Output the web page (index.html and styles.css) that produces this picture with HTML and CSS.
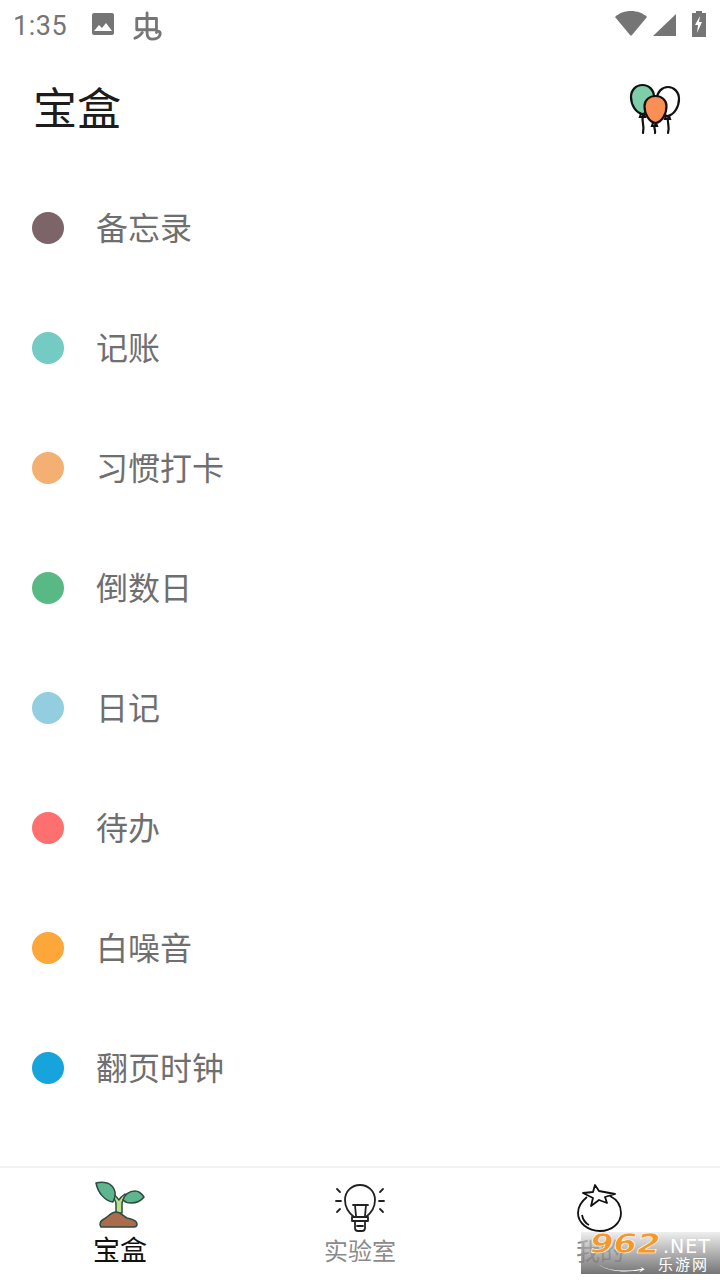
FILE: index.html
```html
<!DOCTYPE html>
<html lang="zh-CN">
<head>
    <meta charset="UTF-8">
    <meta name="viewport" content="width=device-width, initial-scale=1.0">
    <title>宝盒</title>
    <link rel="stylesheet" href="styles.css">
</head>
<body>

<div class="page">
    <!-- Status bar -->
    <div class="status-bar">
        <div class="status-left">
            <span class="status-time">1:35</span>
            <svg class="status-image" width="24" height="24" viewBox="0 0 24 24"><rect x="1" y="1" width="22" height="22" rx="2" fill="#757575"/><path d="M3 19l5-6 3 3 4-5 6 8z" fill="#fff"/></svg>
            <svg class="status-bug" width="30" height="32" viewBox="0 0 32 32" fill="none" stroke="#757575" stroke-width="3" stroke-linecap="round" stroke-linejoin="round"><path d="M4 8h21v12H4z"/><path d="M15 2v21c0 4 1 7 5 7 5 0 9-2 9-6 0-3-4-3-4-1"/><path d="M2 29c3-1 6-3 8-6"/></svg>
        </div>
        <div class="status-right">
            <svg class="status-wifi" width="32" height="26" viewBox="0 0 32 26"><path d="M0 6C4 2 10 0 16 0s12 2 16 6L17 24a1.4 1.4 0 0 1-2 0z" fill="#757575"/></svg>
            <svg class="status-signal" width="23" height="22" viewBox="0 0 23 22"><path d="M23 0v22H0z" fill="#757575"/></svg>
            <svg width="14" height="26" viewBox="0 0 14 26"><path d="M4 0h6v2h4v24H0V2h4z" fill="#757575"/><path d="M8 5L3 14h3l-1 8 5-11H7z" fill="#fff"/></svg>
        </div>
    </div>

    <header class="app-header">
        <h1>宝盒</h1>
        <svg class="balloons" width="52" height="52" viewBox="0 0 52 52" fill="none" stroke="#111" stroke-width="2.2" stroke-linecap="round">
            <path d="M39 35c-1 5 2 8 0 15M37 33l-1 3h5l-1-3"/>
            <path d="M38.500 33C32 32 28 24 28 16c0-7 5-12 11-12s11 5 11 12c0 8-5 16-11.500 17z" fill="#fff"/>
            <path d="M14 33c-2 5 2 9 0 17M12 31l-1 3h5l-1-3"/>
            <path d="M13.500 31C7 30 2 22 2 14 2 7 7 2 13.500 2S25 7 25 14c0 8-5 16-11.500 17z" fill="#7dcfac"/>
            <path d="M26 42c-2 3 1 5 0 8M24 40l-1 3h5l-1-3"/>
            <path d="M26.500 40C20 39 15.500 31 15.500 23c0-6 5-10 11-10s11 4 11 10c0 8-4.500 16-11 17z" fill="#fa8f55"/>
        </svg>
    </header>

    <ul class="tool-list">
        <li class="tool-item"><span class="dot dot-memo"></span><span class="tool-name">备忘录</span></li>
        <li class="tool-item"><span class="dot dot-account"></span><span class="tool-name">记账</span></li>
        <li class="tool-item"><span class="dot dot-habit"></span><span class="tool-name">习惯打卡</span></li>
        <li class="tool-item"><span class="dot dot-countdown"></span><span class="tool-name">倒数日</span></li>
        <li class="tool-item"><span class="dot dot-diary"></span><span class="tool-name">日记</span></li>
        <li class="tool-item"><span class="dot dot-todo"></span><span class="tool-name">待办</span></li>
        <li class="tool-item"><span class="dot dot-noise"></span><span class="tool-name">白噪音</span></li>
        <li class="tool-item"><span class="dot dot-clock"></span><span class="tool-name">翻页时钟</span></li>
    </ul>

    <nav class="tab-bar">
        <div class="tab tab-active">
            <svg width="50" height="50" viewBox="0 0 50 50" stroke="#2f4a40" stroke-width="1.5" stroke-linejoin="round">
                <path d="M21 33V24c0-3-3-7-7-10l2-2c3 2 6 5 8 8 1-2 3-4 6-6l2 2c-3 2-5 5-5 8v9z" fill="#b9e08a"/>
                <path d="M18 22C10 21 3 13 1 3c8-2 15 0 18 6 2 4 1 9-1 13z" fill="#5eb68e"/>
                <path d="M28 20c1-5 6-9 12-9 4 0 7 3 9 6-3 4-8 6-13 6-3 0-6-1-8-3z" fill="#5eb68e"/>
                <path d="M6 47c-2-3-1-6 3-8 4-2 7-7 12-7 5 0 7 4 11 6 5 1 10 3 10 6 0 2-1 3-3 3z" fill="#ab6b4d"/>
            </svg>
            <span class="tab-label">宝盒</span>
        </div>
        <div class="tab">
            <svg class="tab-icon-low" width="50" height="48" viewBox="0 0 50 48" fill="none" stroke="#222" stroke-width="1.8" stroke-linecap="round" stroke-linejoin="round">
                <path d="M19 33c-5-4-9-10-9-17C10 7 17 1 25 1s15 6 15 15c0 7-4 13-9 17"/>
                <path d="M18 21h15M20 21l1 11M31 21l-1 11"/>
                <path d="M17 33h16v4H17zM20 37v7c0 2 1 3 3 3h4c2 0 3-1 3-3v-7M22 42h6"/>
                <path d="M2 5l3 3M1 17h5M2 28l3-3M48 5l-3 3M49 17h-5M48 28l-3-3"/>
            </svg>
            <span class="tab-label">实验室</span>
        </div>
        <div class="tab">
            <svg class="tab-icon-low" width="46" height="50" viewBox="0 0 46 50" fill="none" stroke="#111" stroke-width="1.8" stroke-linejoin="round">
                <path d="M10 13C5 17 1 22 1 29c0 10 10 18 22 18s21-8 21-18c0-8-5-14-11-17"/>
                <path d="M18 1l4 6 16 3-10 3 2 6-8-3-8 6 2-8-10-5 10-1z" fill="#fff"/>
                <path d="M5 31c1 5 3 8 7 10"/>
            </svg>
            <span class="tab-label tab-label-me">我的</span>
        </div>
    </nav>

    <!-- Site watermark over the corner -->
    <div class="watermark">
        <div class="wm-top"><span class="wm-num">962</span><span class="wm-net">.NET</span></div>
        <div class="wm-cn">乐游网</div>
        <svg class="wm-swoosh" width="68" height="10" viewBox="0 0 76 16"><path d="M2 2c16 12 46 12 70 7l-3-3 7 4-9 5 3-4C46 16 16 14 2 2z" fill="#fff"/></svg>
    </div>
</div>

</body>
</html>
```

FILE: styles.css
```css
/* Body styling */
body {
    margin: 0;
    font-family: Roboto, "Noto Sans CJK SC", sans-serif;
    background: #ffffff;
}

.page {
    position: relative;
    width: 720px;
    height: 1280px;
    display: flex;
    flex-direction: column;
    overflow: hidden;
}

/* Status bar */
.status-bar {
    height: 48px;
    flex: none;
    display: flex;
    justify-content: space-between;
    align-items: center;
    padding: 0 14px 0 13px;
    box-sizing: border-box;
}

.status-left {
    display: flex;
    align-items: center;
}

.status-time {
    font-size: 27px;
    color: #757575;
    letter-spacing: 0.5px;
    margin-top: 3px;
}

.status-image {
    margin-left: 24px;
}

.status-bug {
    margin-left: 18px;
    margin-top: 4px;
}

.status-right {
    display: flex;
    align-items: center;
}

.status-wifi {
    margin-right: 6px;
    margin-top: -1px;
}

.status-signal {
    margin-right: 16px;
    margin-top: 2px;
}

/* Header */
.app-header {
    height: 120px;
    flex: none;
    display: flex;
    justify-content: space-between;
    align-items: center;
    padding: 0 39px 0 33px;
}

.app-header h1 {
    margin: 0 0 4px;
    font-size: 44px;
    font-weight: 400;
    color: #1c1c1c;
}

.balloons {
    margin-top: 2px;
}

/* Tool list */
.tool-list {
    list-style: none;
    margin: 0;
    padding: 0;
    flex: 1;
}

.tool-item {
    height: 120px;
    display: flex;
    align-items: center;
    padding-left: 32px;
    font-size: 32px;
    color: #6f6f6f;
}

.tool-name {
    margin-bottom: 4px;
}

.dot {
    width: 32px;
    height: 32px;
    border-radius: 50%;
    margin-right: 32px;
}

.dot-memo { background: #7d6468; }
.dot-account { background: #73cbc3; }
.dot-habit { background: #f4af73; }
.dot-countdown { background: #59b985; }
.dot-diary { background: #92cde0; }
.dot-todo { background: #fe7070; }
.dot-noise { background: #fda63a; }
.dot-clock { background: #17a3dc; }

/* Bottom tabs */
.tab-bar {
    height: 114px;
    flex: none;
    display: flex;
    border-top: 2px solid #f3f3f3;
    box-sizing: border-box;
    padding-top: 12px;
}

.tab {
    flex: 1;
    display: flex;
    flex-direction: column;
    align-items: center;
    height: 86px;
}

.tab svg {
    flex: none;
}

.tab-icon-low {
    margin-top: 4px;
}

.tab-label {
    font-size: 24px;
    line-height: 30px;
    color: #8a8a8a;
    margin-top: 5px;
}

.tab-label-me {
    margin-top: 3px;
}

.tab-active .tab-label {
    font-size: 27px;
    color: #111111;
    margin-top: 6px;
}

/* Watermark */
.watermark {
    position: absolute;
    right: 0;
    bottom: 6px;
    width: 139px;
    height: 42px;
    background: linear-gradient(180deg, rgba(225, 225, 225, 0.55), rgba(105, 105, 105, 0.92));
    font-family: "DejaVu Sans", "Noto Sans CJK SC", sans-serif;
    color: #ffffff;
}

.wm-top {
    display: flex;
    align-items: baseline;
    padding-left: 9px;
    height: 24px;
    line-height: 24px;
}

.wm-num {
    display: inline-block;
    width: 73px;
    font-size: 27px;
    font-weight: 700;
    font-style: italic;
    color: #f5972a;
    -webkit-text-stroke: 0.6px #ffffff;
    transform: scaleX(1.25);
    transform-origin: left;
}

.wm-net {
    font-size: 19px;
    letter-spacing: 1px;
}

.wm-cn {
    font-size: 15px;
    line-height: 18px;
    padding-left: 77px;
    letter-spacing: 2px;
}

.wm-swoosh {
    position: absolute;
    left: 6px;
    bottom: 1px;
}
```
